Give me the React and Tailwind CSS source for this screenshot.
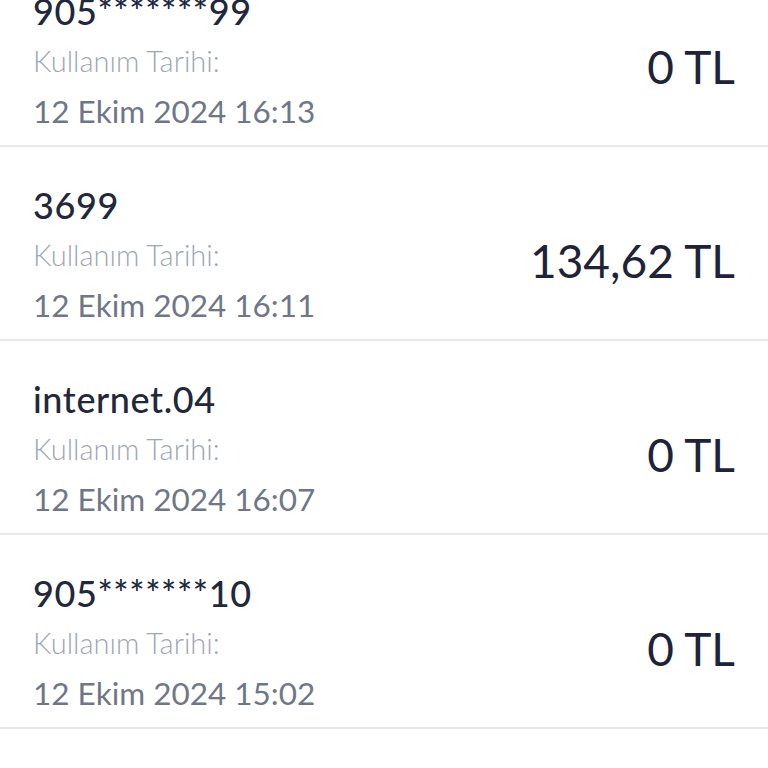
import React from "react";

const usages = [
  { name: "905*******99", date: "12 Ekim 2024 16:13", amount: "0 TL" },
  { name: "3699", date: "12 Ekim 2024 16:11", amount: "134,62 TL" },
  { name: "internet.04", date: "12 Ekim 2024 16:07", amount: "0 TL" },
  { name: "905*******10", date: "12 Ekim 2024 15:02", amount: "0 TL" },
];

const UsageRow = ({ item }) => {
  return (
    <div className="border-b-2 border-[#e6e8ec]">
      <div className="flex justify-between items-center px-[33px] pt-[33px] pb-[9px]">
        <div className="flex flex-col">
          <span className="text-[36px] leading-[50px] font-medium tracking-[0.6px] text-[#22273b]">
            {item.name}
          </span>
          <span className="text-[29px] leading-[50px] font-light text-[#a0a6b3]">
            Kullanım Tarihi:
          </span>
          <span className="text-[31.5px] leading-[50px] text-[#6f7787]">
            {item.date}
          </span>
        </div>
        <span className="text-[46px] leading-[56px] mt-3 text-[#1e2337]">
          {item.amount}
        </span>
      </div>
    </div>
  );
};

export default function App() {
  return (
    <div className="w-[768px] h-[768px] overflow-hidden bg-white font-['Lato',sans-serif]">
      <div className="-mt-[47px]">
        {usages.map((item) => (
          <UsageRow key={item.name} item={item} />
        ))}
      </div>
    </div>
  );
}
